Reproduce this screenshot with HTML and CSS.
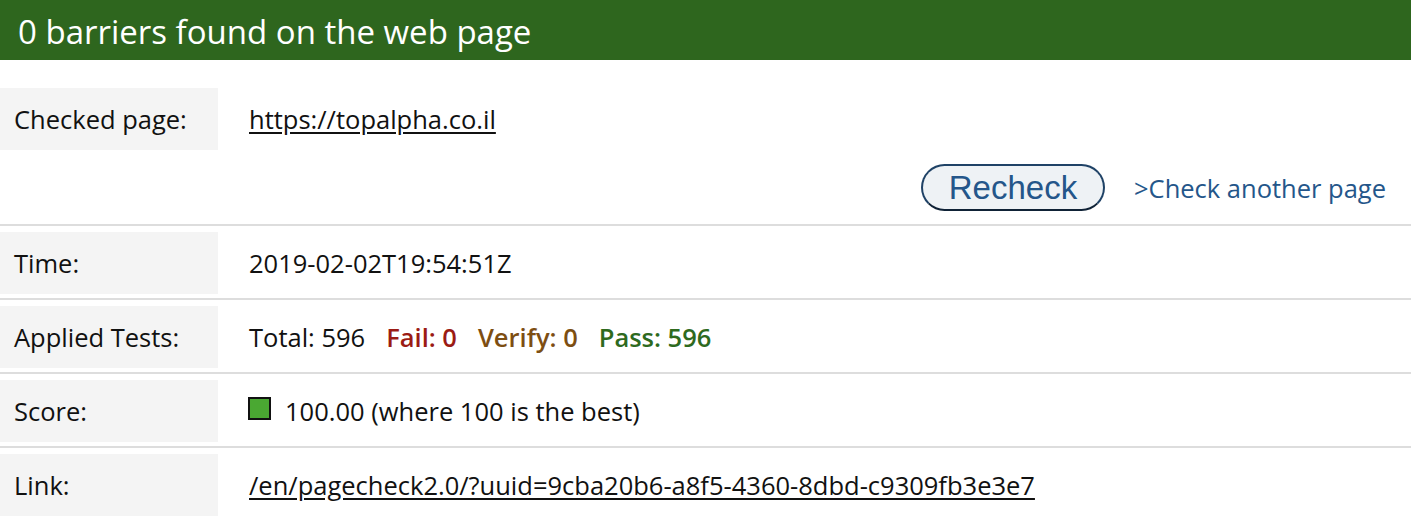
FILE: index.html
```html
<!DOCTYPE html>
<html lang="en">
<head>
<meta charset="utf-8">
<title>Page check result</title>
<link rel="stylesheet" href="styles.css">
</head>
<body>
<h1 class="banner">0 barriers found on the web page</h1>
<div class="results">
  <div class="row">
    <div class="label">Checked page:</div>
    <div class="value"><a href="#" class="ulink">https://topalpha.co.il</a></div>
  </div>
  <div class="actions">
    <button class="recheck" type="button">Recheck</button>
    <a href="#" class="another">&gt;Check another page</a>
  </div>
  <div class="sep"></div>
  <div class="row">
    <div class="label">Time:</div>
    <div class="value">2019-02-02T19:54:51Z</div>
  </div>
  <div class="sep"></div>
  <div class="row">
    <div class="label">Applied Tests:</div>
    <div class="value tests">
      <span>Total: 596</span>
      <span class="fail">Fail: 0</span>
      <span class="verify">Verify: 0</span>
      <span class="pass">Pass: 596</span>
    </div>
  </div>
  <div class="sep"></div>
  <div class="row">
    <div class="label">Score:</div>
    <div class="value"><span class="swatch"></span>100.00 (where 100 is the best)</div>
  </div>
  <div class="sep"></div>
  <div class="row">
    <div class="label">Link:</div>
    <div class="value"><a href="#" class="ulink">/en/pagecheck2.0/?uuid=9cba20b6-a8f5-4360-8dbd-c9309fb3e3e7</a></div>
  </div>
</div>
</body>
</html>
```
FILE: styles.css
```css
html, body {
  margin: 0;
  padding: 0;
  background: #ffffff;
}
body {
  font-family: "Open Sans", "Noto Sans", sans-serif;
  color: #111111;
  overflow: hidden;
}
.banner {
  margin: 0;
  height: 60px;
  line-height: 64px;
  padding-left: 18px;
  background: #2e661e;
  color: #ffffff;
  font-size: 33px;
  font-weight: 400;
}
.results {
  margin-top: 28px;
}
.row {
  display: flex;
  height: 62px;
  align-items: stretch;
  font-size: 25.5px;
}
.label {
  width: 218px;
  box-sizing: border-box;
  padding-left: 14px;
  background: #f4f4f4;
  display: flex;
  align-items: center;
}
.value {
  padding-left: 31px;
  display: flex;
  align-items: center;
}
.ulink {
  color: #111111;
  text-decoration: underline;
  text-underline-offset: 3px;
}
.tests {
  gap: 21px;
}
.fail { color: #9b1b14; font-weight: 600; }
.verify { color: #7d4e12; font-weight: 600; }
.pass { color: #2e6a1e; font-weight: 600; }
.swatch {
  display: inline-block;
  width: 19px;
  height: 19px;
  border: 2px solid #111111;
  background: #4aa832;
  margin-left: -1px;
  margin-right: 14px;
  margin-top: -6px;
}
.actions {
  height: 74px;
  display: flex;
  justify-content: flex-end;
  align-items: center;
  padding-right: 25px;
  gap: 29px;
}
.recheck {
  width: 184px;
  height: 47px;
  border-radius: 24px;
  border: 2px solid #1f4266;
  border-bottom-color: #0f2236;
  background: #eef2f5;
  color: #24568a;
  font-family: "Liberation Sans", Arial, sans-serif;
  font-size: 33px;
  line-height: 1;
  padding: 0;
}
.another {
  color: #24568a;
  text-decoration: none;
  font-size: 25.5px;
  margin-top: 2px;
}
.sep {
  border-top: 2px solid #dddddd;
  margin-top: 4px;
  margin-bottom: 6px;
}
.actions + .sep {
  margin-top: 0;
}
```
